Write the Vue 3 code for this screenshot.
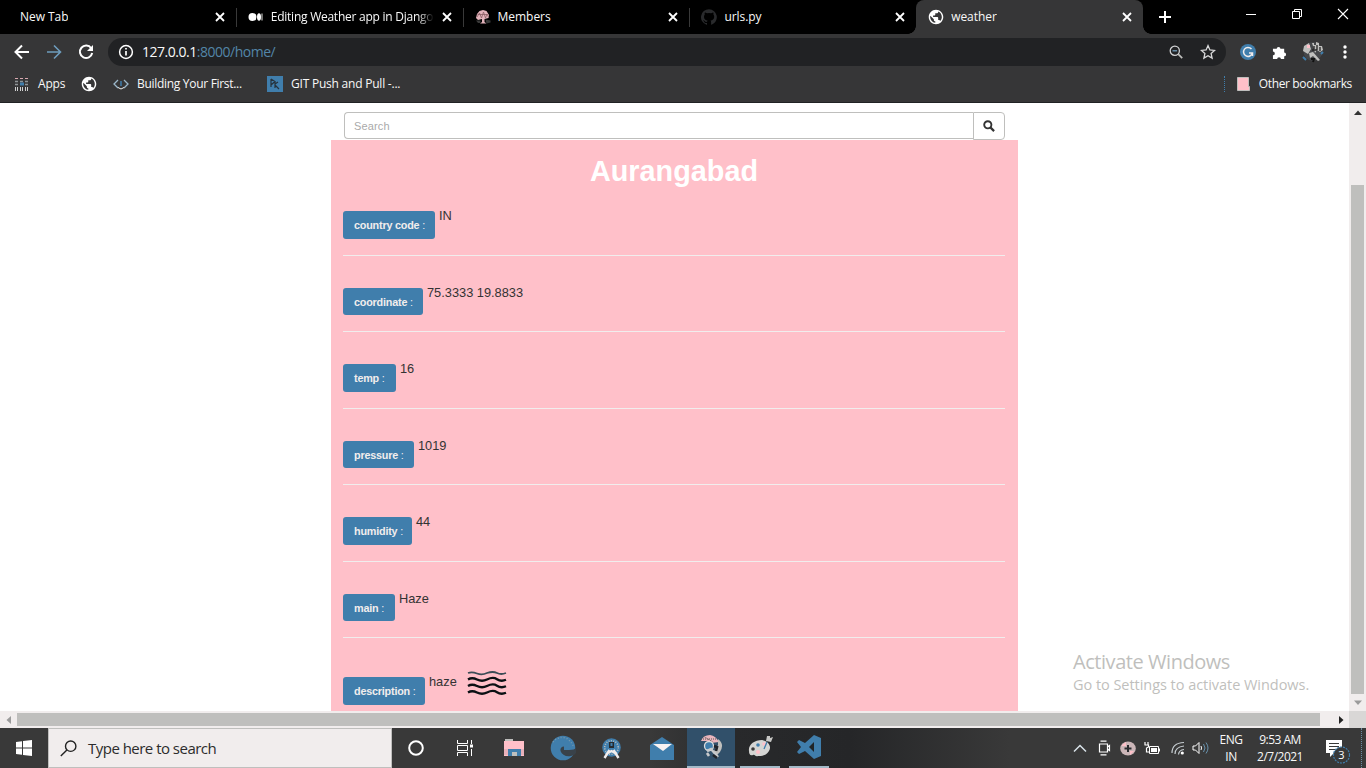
<script setup>
const globe = 'M12 2C6.48 2 2 6.48 2 12s4.48 10 10 10 10-4.48 10-10S17.52 2 12 2zm-1 17.93c-3.95-.49-7-3.85-7-7.93 0-.62.08-1.21.21-1.79L9 15v1c0 1.1.9 2 2 2v1.93zm6.9-2.54c-.26-.81-1-1.39-1.9-1.39h-1v-3c0-.55-.45-1-1-1H8v-2h2c.55 0 1-.45 1-1V7h2c1.1 0 2-.9 2-2v-.41c2.93 1.19 5 4.06 5 7.41 0 2.08-.8 3.97-2.1 5.39z'
const tabs = [
  { title: 'New Tab', icon: '' },
  { title: 'Editing Weather app in Django', icon: 'medium' },
  { title: 'Members', icon: 'tree' },
  { title: 'urls.py', icon: 'github' },
  { title: 'weather', icon: 'globe', active: true },
]
const rows = [
  { label: 'country code', value: 'IN', w: 92 },
  { label: 'coordinate', value: '75.3333 19.8833', w: 80 },
  { label: 'temp', value: '16', w: 53 },
  { label: 'pressure', value: '1019', w: 71 },
  { label: 'humidity', value: '44', w: 69 },
  { label: 'main', value: 'Haze', w: 52 },
  { label: 'description', value: 'haze', w: 82, haze: true },
]
</script>

<template>
  <div class="screen">
    <header>
      <div class="tabstrip">
        <div v-for="t in tabs" :key="t.title" class="tab" :class="{ active: t.active }">
          <svg v-if="t.icon === 'medium'" class="fav" viewBox="0 0 16 16"><circle cx="4.5" cy="8" r="4" fill="#fff" /><ellipse cx="11" cy="8" rx="2" ry="3.8" fill="#fff" /><path d="M14 4.5v7" stroke="#bfbfbd" stroke-width="1.2" /></svg>
          <svg v-if="t.icon === 'tree'" class="fav" viewBox="0 0 16 16"><path d="M1 9 2 5 4.5 2 8 1l3.5 1L14 6l-.5 3-4 1v3l2 1.5H5L7 13v-3l-4 1z" fill="#e3b3bb" /><path d="M2.5 5.5h10M2 8l2.5-4 2 5 2-6 2 6 1.5-4 1.5 3" stroke="#8b5f66" stroke-width=".8" fill="none" /><path d="M1 11.5h4.5V14H3zM10.5 10.5l5 1v2l-4 1z" fill="#393939" /></svg>
          <svg v-if="t.icon === 'github'" class="fav" viewBox="0 0 16 16"><path d="M8 .2a8 8 0 0 0-2.5 15.6c.4.1.5-.2.5-.4v-1.5c-2.2.5-2.7-1-2.7-1-.4-.9-.9-1.2-.9-1.2-.7-.5.1-.5.1-.5.8.1 1.2.8 1.2.8.7 1.2 1.9.9 2.4.7.1-.5.3-.9.5-1.1-1.8-.2-3.6-.9-3.6-4 0-.9.3-1.6.8-2.1-.1-.2-.4-1 .1-2.1 0 0 .7-.2 2.2.8a7.5 7.5 0 0 1 4 0c1.5-1 2.2-.8 2.2-.8.4 1.1.1 1.9.1 2.1.5.5.8 1.2.8 2.1 0 3.1-1.9 3.8-3.7 4 .3.3.6.8.6 1.5v2.2c0 .2.1.5.5.4A8 8 0 0 0 8 .2" fill="#292a2c" /></svg>
          <svg v-if="t.icon === 'globe'" class="fav" viewBox="1 1 22 22"><path :d="globe" fill="#fff" /></svg>
          <span class="title" :class="t.icon">{{ t.title }}</span>
          <svg class="close" viewBox="0 0 10 10"><path d="m1 1 8 8M9 1 1 9" stroke="#fff" stroke-width="1.8" /></svg>
        </div>
        <svg class="plus" viewBox="0 0 12 12"><path d="M6 0v12M0 6h12" stroke="#fff" stroke-width="2" /></svg>
        <div class="winctl">
          <svg viewBox="0 0 12 12"><path d="M1 6.5h10" stroke="#fff" /></svg>
          <svg viewBox="0 0 12 12"><path d="M1.5 3.5h7v7h-7zM3.5 3.5v-2h7v7h-2" stroke="#fff" fill="none" /></svg>
          <svg viewBox="0 0 12 12"><path d="m1 1 10 10M11 1 1 11" stroke="#fff" stroke-width="1.1" /></svg>
        </div>
      </div>

      <div class="toolbar">
        <svg class="nav" viewBox="0 0 16 16"><path d="M15 8H2M8 1.5 1.5 8 8 14.5" stroke="#fff" stroke-width="2" fill="none" /></svg>
        <svg class="nav" viewBox="0 0 16 16"><path d="M1 8h13M8 1.5 14.5 8 8 14.5" stroke="#6e9dbd" stroke-width="1.6" fill="none" /></svg>
        <svg class="nav" viewBox="0 0 16 16"><path d="M13.2 4.2A6.2 6.2 0 1 0 14.2 9" stroke="#fff" stroke-width="2" fill="none" /><path d="M15 1v6H9z" fill="#fff" /></svg>
        <div class="omnibox">
          <svg class="info" viewBox="0 0 16 16"><circle cx="8" cy="8" r="6.4" stroke="#fff" stroke-width="1.5" fill="none" /><path d="M8 7v4.5M8 4v1.6" stroke="#fff" stroke-width="1.7" /></svg>
          <span class="url">127.0.0.1<i>:8000/home/</i></span>
          <svg class="lens" viewBox="0 0 14 14"><circle cx="5.8" cy="5.8" r="4.6" stroke="#d2d3d4" stroke-width="1.3" fill="none" /><path d="m9.2 9.2 4 4" stroke="#bfbfbd" stroke-width="1.7" /><path d="M3.5 5.8h4.6" stroke="#79a5c4" stroke-width="1.2" /></svg>
          <svg class="star" viewBox="0 0 16 16"><path d="m8 1.6 1.9 4.3 4.7.5-3.5 3.1 1 4.6L8 11.7l-4.1 2.4 1-4.6-3.5-3.1 4.7-.5z" stroke="#d9d9da" stroke-width="1.3" fill="none" /></svg>
        </div>
        <svg class="ext" viewBox="0 0 16 16"><circle cx="8" cy="8" r="8" fill="#407eac" /><path d="M11.5 5A4.5 4.5 0 1 0 12.4 9H9m3.5 0v3" stroke="#f1eded" stroke-width="1.5" fill="none" /></svg>
        <svg class="puzzle" viewBox="0 0 16 16"><path d="M1 4h4a2 2 0 1 1 4 0h4v4a2 2 0 1 1 0 4v3H9.5a2 2 0 0 0-4 0H1v-4a2 2 0 0 0 0-4z" fill="#fff" /></svg>
        <svg class="avatar" viewBox="0 0 22 22"><circle cx="11" cy="10.5" r="9.5" fill="#45474a" /><path d="M2 5 7 2l2 6-3 5-5-3z" fill="#bfbfbd" /><path d="M5 4h3v3H5z" fill="#ffc0c9" /><path d="M10 2h2v2h2V1l3 1v3h3l1 4-3 2-3-2-2 3-1-4z" fill="#bfbfbd" /><path d="M12 5v3M15 4v5M18 6v4M10 9h5" stroke="#222" stroke-width="1.3" /><path d="m7 12 4-1 7 8-2 1-5-5-3 2z" fill="#bfbfbd" /><path d="M9 18h3l-1 3" stroke="#111" stroke-width="2" fill="none" /><path d="m1 16 3 3M19 13l2-2" stroke="#407eac" stroke-width="2" /></svg>
        <svg class="dots" viewBox="0 0 4 14"><circle cx="2" cy="2" r="1.7" fill="#fff" /><circle cx="2" cy="7" r="1.7" fill="#fff" /><circle cx="2" cy="12" r="1.7" fill="#fff" /></svg>
      </div>

      <div class="bookmarks">
        <svg class="apps" viewBox="0 0 15 15"><path d="M1 1.5h3M6 1.5h3M11 1.5h3" stroke="#d9a9b0" stroke-width="1.2" /><path d="M1 4.5h3M6 4.5h3M11 4.5h3M1 7.5h3M11 7.5h3" stroke="#8f9496" stroke-width="1.4" /><path d="M6 7h4" stroke="#407eac" stroke-width="3" /><path d="M1.5 10v4M3.5 10v4M6.5 10v4M8.5 10v4M11.5 10v4M13.5 10v4" stroke="#d0d0d0" /></svg>
        <span class="b-apps">Apps</span>
        <svg class="fav globe" viewBox="1 1 22 22"><path :d="globe" fill="#fff" /></svg>
        <svg class="code" viewBox="0 0 16 12"><path d="M5 2 1 6l4 4M11 2l4 4-4 4" stroke="#9cb8cb" stroke-width="1.3" fill="none" /><path d="M5 9.5 8 11l3-1.5" stroke="#eee" fill="none" /><path d="M8 3v5" stroke="#407eac" stroke-width="1.5" /></svg>
        <span class="b-build">Building Your First...</span>
        <svg class="dc" viewBox="0 0 16 16"><path d="M0 0h16v16H0z" fill="#407eac" /><path d="M4 3v8M4 3l4 2.5L4 9M8 6v6m0-4 3-2M8 9l4 4" stroke="#26323b" stroke-width="1.2" fill="none" /></svg>
        <span class="b-git">GIT Push and Pull -...</span>
        <div class="other">
          <svg class="folder" viewBox="0 0 13 14"><path d="M.5.5h11v9h1v4H.5z" fill="#ffc0c9" stroke="#bfbfbd" /></svg>
          <span>Other bookmarks</span>
        </div>
      </div>
    </header>

    <main>
      <div class="page">
        <div class="search">
          <div class="field">Search</div>
          <div class="go"><svg viewBox="0 0 12 12"><circle cx="4.8" cy="4.8" r="3.6" stroke="#333" stroke-width="1.9" fill="none" /><path d="m7.6 7.6 3.5 3.5" stroke="#333" stroke-width="2.2" /></svg></div>
        </div>
        <div class="panel">
          <h1>Aurangabad</h1>
          <div v-for="r in rows" :key="r.label" class="row" :class="{ last: r.haze }">
            <div class="entry">
              <div class="btn" :style="{ width: r.w + 'px' }"><b>{{ r.label }}</b>&nbsp;:</div>
              <span class="val">{{ r.value }}</span>
              <svg v-if="r.haze" class="haze" viewBox="0 0 40 26"><g fill="none" stroke="#0b1014" stroke-width="2.3"><path d="M1 3q4-1.5 9 .5t10-.5q6-2 10 0t9 0" stroke="#3b4b56" stroke-width="1.8" /><path d="M1 9.5q4-2.5 9 0t10 0q6-3 10-.3t9 .6M1 16q4-2.5 9 0t10 0q6-3 10-.3t9 .6M1 22.5q4-2.5 9 0t10 0q6-3 10-.3t9 .6" /></g></svg>
            </div>
          </div>
        </div>
        <div class="activate"><p class="a1">Activate Windows</p><p class="a2">Go to Settings to activate Windows.</p></div>
      </div>
      <div class="vscroll"><svg viewBox="0 0 8 5"><path d="m4 .5 4 4.5H0z" fill="#333" /></svg><div class="thumb"></div><svg class="down" viewBox="0 0 8 5"><path d="M0 .5h8L4 5z" fill="#9b9b9b" /></svg></div>
    </main>

    <div class="hscroll"><svg viewBox="0 0 5 8"><path d="M5 0v8L.5 4z" fill="#9b9b9b" /></svg><div class="thumb"></div><svg class="right" viewBox="0 0 5 8"><path d="M0 0v8l4.5-4z" fill="#222" /></svg><div class="corner"></div></div>

    <footer>
      <div class="start"><svg viewBox="0 0 16 16"><path d="m0 2 6-.8v6.3H0zM7 1l9-1v7.5H7zM0 8.5h6v6.3L0 14zM7 8.5h9V16l-9-1.1z" fill="#fff" /></svg></div>
      <div class="type"><svg viewBox="0 0 17 17"><circle cx="10.7" cy="6.2" r="5.2" stroke="#222" stroke-width="1.4" fill="none" /><path d="M6.9 9.9.8 16" stroke="#222" stroke-width="1.4" /></svg><span>Type here to search</span></div>
      <div class="task"><svg width="16" height="16" viewBox="0 0 16 16"><circle cx="8" cy="8" r="6.8" stroke="#fff" stroke-width="2" fill="none" /></svg></div>
      <div class="task"><svg width="16" height="16" viewBox="0 0 16 16"><path d="M.5 0v3.5h10V0M.5 16v-3.5h10V16M.5 5.5h10v5H.5zM14.5 0v4M14.5 9v7" stroke="#fff" fill="none" /><path d="M13 4.5h3v3h-3z" fill="#fff" /></svg></div>
      <div class="task"><svg width="22" height="20" viewBox="0 0 22 20"><path d="M2 1h8v3H2z" fill="#bfbfbd" /><path d="M1 3h20v15H1z" fill="#ffc0c9" /><path d="M1 17v-6h20v6" fill="#e8b1ba" /><path d="M5 18v-7h13v7h-4v-4H9v4z" fill="#407eac" /><path d="M9 14h5v4H9z" fill="#bfbfbd" /></svg></div>
      <div class="task"><svg width="26" height="26" viewBox="0 0 26 26"><circle cx="13" cy="13" r="12.3" fill="#407eac" /><path d="M10.500 16c-.5-3 1-4.500 3.500-4.500V15h5c4 0 6-1 7-2v5q-2 3-5 3c-5 1-9-1-10.500-5z" fill="#39424a" /><path d="M3 7Q8 1 16 3q5 3 8 9" stroke="#7598ad" stroke-width="1.5" stroke-dasharray="1 2" fill="none" /></svg></div>
      <div class="task"><svg width="22" height="23" viewBox="0 0 22 23"><circle cx="10.5" cy="10.500" r="9.3" fill="#407eac" /><circle cx="10.5" cy="10.5" r="6.8" fill="none" stroke="#bfbfbd" stroke-width="1.6" stroke-dasharray="1 1.4" /><path d="M8 5h5v6H8z" fill="#282b2e" /><path d="M9.5 6h2v3h-2z" fill="#407eac" /><path d="m8.500 13-5 8M12.500 13l5 8M5 17l5.500-3 5.500 3" stroke="#f1eded" stroke-width="2.4" fill="none" /></svg></div>
      <div class="task"><svg width="28" height="25" viewBox="0 0 28 25"><path d="M2 9 14 1l12 8v15H2z" fill="#407eac" /><path d="M5 8h19l-9 7z" fill="#f8f3f3" /></svg></div>
      <div class="task chrome"><svg width="26" height="26" viewBox="0 0 26 26"><path d="M3 7q2-6 9-6 6 1 9 7l-8 1-5-2z" fill="#eab5bd" /><path d="M3 5h15M5 2l10 6" stroke="#555" stroke-dasharray="1 1" /><path d="M20 5q7 5 2 13l-4 4-2-5 4-6z" fill="#bfbfbd" /><circle cx="11" cy="12" r="4.500" fill="#407eac" stroke="#ddd" stroke-width="1.3" /><path d="m9 17 4-2 7 8M9 19l2 3" stroke="#c8cacc" stroke-width="2.6" fill="none" /><path d="m16 12 3 1-1 4M15 21l4 3" stroke="#20242a" stroke-width="2.6" fill="none" /></svg></div>
      <div class="task open paint"><svg width="26" height="24" viewBox="0 0 26 24"><path d="M2 16C1 10 7 5 15 5c6 1 10 6 7 11-3 5-8 5-11 5-3 1-3-2-5-1-3 1-4-1-4-4z" fill="#d5d5d3" /><circle cx="6" cy="14" r="1.800" fill="#393939" /><circle cx="11" cy="10" r="1.800" fill="#407eac" /><circle cx="17" cy="9" r="1.800" fill="#ffc0c9" /><circle cx="11" cy="17" r="2" fill="#ffc0c9" /><path d="m17 14 3-7" stroke="#407eac" stroke-width="1.3" /><path d="m19 6 1-5h3v2l3-1-2 5z" fill="#c8c8c6" /></svg></div>
      <div class="task open code-app"><svg width="25" height="25" viewBox="0 0 25 25"><path d="m18 0 7 3v18l-7 3-9-8-6 3-2-2 4-5-4-5 2-2 6 3z" fill="#407eac" /><path d="M18 7v10l-5-5z" fill="#202528" /></svg></div>
      <div class="tray">
        <svg class="t1" width="14" height="9" viewBox="0 0 14 9"><path d="m1 7.5 6-6 6 6" stroke="#d8e2e8" stroke-width="1.5" fill="none" /></svg>
        <svg class="t2" width="14" height="16" viewBox="0 0 14 16"><path d="M1.5 4h8v8h-8zM9.500 7l2-1.500v5l-2-1.500M2.500 1.200h6M2.500 14.800h6" stroke="#fff" stroke-width="1.2" fill="none" /></svg>
        <svg class="t3" width="16" height="15" viewBox="0 0 16 15"><ellipse cx="8" cy="7.500" rx="7.800" ry="7" fill="#cbb6b8" /><path d="M2 4 6 1v4H2zM10 10h4l-4 4z" fill="#ffc0c9" /><path d="M8 4v7M4.500 7.500h7" stroke="#292b2e" stroke-width="2" /></svg>
        <svg class="t4" width="16" height="13" viewBox="0 0 16 13"><path d="M5.500 4.500h9v7h-9z" stroke="#fff" fill="none" /><path d="M7 6h6v4H7zM15 6.500h1v3h-1z" fill="#fff" /><path d="M1 0v3M4 0v3M.5 3h4v2l-2 1v4h3" stroke="#fff" stroke-width="1.200" fill="none" /></svg>
        <svg class="t5" width="14" height="14" viewBox="0 0 14 14"><g stroke="#c7ced2" stroke-width="1.2" fill="none"><path d="M1 12Q1 2 13 1.500M4 13Q4 6 13 5M7.500 13.500q.5-4.500 5.500-5" /></g><circle cx="11.300" cy="12" r="1.600" fill="#fff" /></svg>
        <svg class="t6" width="17" height="14" viewBox="0 0 17 14"><path d="M1 5h2.500L7 1.500v11L3.500 9H1z" stroke="#fff" fill="none" /><path d="M9 5q1 2 0 4" stroke="#fff" fill="none" /><path d="M11.500 3q3 4 0 8M14 1.500q4 5.500 0 11" stroke="#6993ae" fill="none" /></svg>
      </div>
      <div class="lang">ENG<br>IN</div>
      <div class="clock">9:53 AM<br>2/7/2021</div>
      <svg class="notice" width="26" height="26" viewBox="0 0 26 26"><path d="M1 1h16v13H9l-4 4v-4H1z" fill="#fff" /><path d="M4 4.500h10M4 7.500h10M4 10.500h7" stroke="#393939" /><circle cx="16.500" cy="16" r="8" fill="#393939" stroke="#407eac" stroke-width="1.200" stroke-dasharray="2 1" /><text x="16.500" y="20" text-anchor="middle" font-size="11" fill="#fff">3</text></svg>
      <div class="peek"></div>
    </footer>
  </div>
</template>

<style>
body { margin: 0; overflow: hidden; }
</style>

<style scoped>
* { box-sizing: border-box; }
svg { flex: none; display: block; }
.screen { width: 1366px; height: 768px; display: flex; flex-direction: column; font: 12px/16px "Open Sans", "Noto Sans", sans-serif; color: #f8f8f8; background: #fff; overflow: hidden; white-space: nowrap; }
header { height: 103px; background: #363637; border-bottom: 1px solid #212224; flex: none; }
.tabstrip { height: 34px; background: #000; display: flex; position: relative; padding-left: 9px; }
.tab { width: 226.8px; height: 34px; flex: none; display: flex; align-items: center; padding: 0 11px 0 12px; position: relative; }
.tab:not(:first-child):not(.active)::before { content: ""; position: absolute; left: 0; top: 8px; height: 19px; border-left: 1px solid #393939; }
.tab.active { background: #363637; border-radius: 8px 8px 0 0; }
.tab.active::before, .tab.active::after { content: ""; position: absolute; bottom: 0; width: 8px; height: 8px; }
.tab.active::before { right: 100%; background: radial-gradient(circle at 0 0, #000 7.5px, #363637 8px); }
.tab.active::after { left: 100%; background: radial-gradient(circle at 100% 0, #000 7.5px, #363637 8px); }
.tab:first-child { padding-left: 11px; }
.fav { width: 16px; height: 16px; margin-right: 7px; }
.title { overflow: hidden; letter-spacing: -.05px; }
.title.medium { letter-spacing: -.25px; width: 163px; mask-image: linear-gradient(90deg, #000 90%, transparent 100%); }
.close { width: 10px; height: 10px; margin-left: auto; }
.plus { width: 12px; height: 12px; margin: 11px 0 0 16px; }
.winctl { margin-left: auto; display: flex; gap: 34px; padding: 8px 17px 0 0; }
.winctl svg { width: 12px; height: 12px; }
.toolbar { height: 36px; display: flex; align-items: center; padding-left: 14px; }
.nav { width: 16px; height: 16px; margin-right: 16px; }
.nav:nth-child(3) { margin-right: 14px; }
.omnibox { width: 1118px; height: 28px; border-radius: 14px; background: #212224; display: flex; align-items: center; padding: 0 10px; flex: none; }
.info { width: 16px; height: 16px; margin-right: 8px; }
.url { font-size: 14px; letter-spacing: -.48px; }
.url i { font-style: normal; color: #5386a8; }
.lens { width: 14px; height: 14px; margin-left: auto; margin-right: 17px; }
.star { width: 16px; height: 16px; }
.ext { width: 16px; height: 16px; margin-left: 14px; }
.puzzle { width: 15px; height: 15px; margin-left: 16px; }
.avatar { width: 22px; height: 22px; margin-left: 15px; }
.dots { width: 4px; height: 14px; margin-left: 19px; }
.bookmarks { height: 28px; display: flex; align-items: center; padding-left: 14px; }
.apps { width: 15px; height: 15px; margin-right: 9px; }
.b-apps { width: 43px; letter-spacing: -.2px; }
.globe { margin-right: 16px; }
.code { width: 16px; height: 12px; margin-right: 8px; }
.b-build { width: 130px; letter-spacing: -.3px; }
.dc { width: 16px; height: 16px; margin-right: 8px; }
.b-git { letter-spacing: -.22px; }
.other { display: flex; align-items: center; margin-left: auto; border-left: 1px dotted #407eac; padding: 0 14px 0 12px; gap: 9px; letter-spacing: -.35px; }
.folder { width: 13px; height: 14px; }
main { height: 608px; flex: none; display: flex; overflow: hidden; }
.page { width: 1349px; flex: none; padding: 9px 0 0 331px; font-family: "Liberation Sans", Arial, sans-serif; color: #333; position: relative; }
.search { margin-left: 13px; width: 661px; height: 28px; display: flex; align-items: flex-start; }
.field { width: 629px; height: 27px; border: 1px solid #bfbfbd; border-right: 0; border-radius: 4px 0 0 4px; padding-left: 9px; font-size: 11px; line-height: 27px; color: #aaa; letter-spacing: .15px; }
.go { width: 32px; height: 28px; border: 1px solid #bfbfbd; border-radius: 0 4px 4px 0; padding: 7px 0 0 9px; }
.go svg { width: 12px; height: 12px; }
.panel { width: 687px; height: 571px; background: #ffc0c9; padding: 0 13px 0 12px; overflow: hidden; }
h1 { margin: 0; height: 67px; padding-top: 14px; text-align: center; color: #fff; font-size: 28.8px; line-height: 34px; }
.row { height: 76.5px; }
.entry { height: 48.7px; display: flex; align-items: flex-start; border-bottom: 1px solid #f1eded; padding-top: 4px; }
.last .entry { padding-top: 11px; border: 0; }
.btn { height: 27.9px; background: #407eac; border-radius: 3px; color: #f1eded; font-size: 10.8px; line-height: 28px; letter-spacing: -.2px; padding-left: 11px; flex: none; }
.val { font-size: 12.8px; line-height: 16px; margin: -3px 0 0 4px; }
.haze { width: 40px; height: 26px; margin: -7px 0 0 10px; }
.activate { position: absolute; left: 1073px; top: 545px; font-family: "Open Sans", sans-serif; color: #bfbfbd; }
.activate p { margin: 0; }
.a1 { font-size: 20px; line-height: 28px; letter-spacing: -.45px; }
.a2 { font-size: 14.5px; line-height: 18px; letter-spacing: -.04px; }
.vscroll { width: 17px; background: #f1eded; display: flex; flex-direction: column; align-items: center; padding-top: 7px; }
.vscroll svg { width: 8px; height: 5px; }
.vscroll .thumb { width: 13px; height: 509px; background: #bfbfbd; margin: 70px 0 6px; }
.hscroll { height: 17px; flex: none; background: #f1eded; display: flex; align-items: center; padding-left: 6px; }
.hscroll svg { width: 5px; height: 8px; }
.hscroll .thumb { width: 1303px; height: 13px; background: #bfbfbd; margin: 0 19px 0 6px; }
.corner { width: 17px; height: 17px; background: #d9d7d6; margin-left: auto; }
footer { height: 40px; flex: none; display: flex; background: linear-gradient(90deg, #393939 650px, #28292b 735px, #252628 850px, #393939 1010px); }
.start { width: 48px; padding: 12px 0 0 16px; }
.start svg { width: 16px; height: 16px; }
.type { width: 344px; height: 40px; background: #f1eded; border: 1px solid #bfbfbd; display: flex; align-items: center; padding-left: 11px; color: #2c2c2c; font-size: 15px; letter-spacing: -.52px; gap: 11px; }
.type svg { width: 17px; height: 17px; }
.task { width: 49.1px; height: 40px; flex: none; display: flex; align-items: center; justify-content: center; position: relative; }
.task:not(.chrome):not(.open) svg { margin-right: 1px; }
.task.chrome { width: 48px; background: #31506a; border-bottom: 2px solid #a4bac8; }
.task.open { width: 40px; border-bottom: 2px solid #a4bac8; margin-left: 5px; }
.task.code-app { margin-left: 9px; }
.tray { display: flex; align-items: center; margin-left: auto; }
.t1 { margin-right: 11px; }
.t2 { margin-right: 8px; }
.t3 { margin-right: 8px; }
.t4 { margin-right: 11px; }
.t5 { margin-right: 7px; }
.lang, .clock { text-align: center; line-height: 17px; padding-top: 3px; letter-spacing: -.5px; }
.lang { width: 44px; }
.clock { width: 54px; }
.notice { margin: 11px 0 0 18px; }
.peek { width: 5px; margin-left: 10px; border-left: 1px dotted #6c8da4; }
</style>
